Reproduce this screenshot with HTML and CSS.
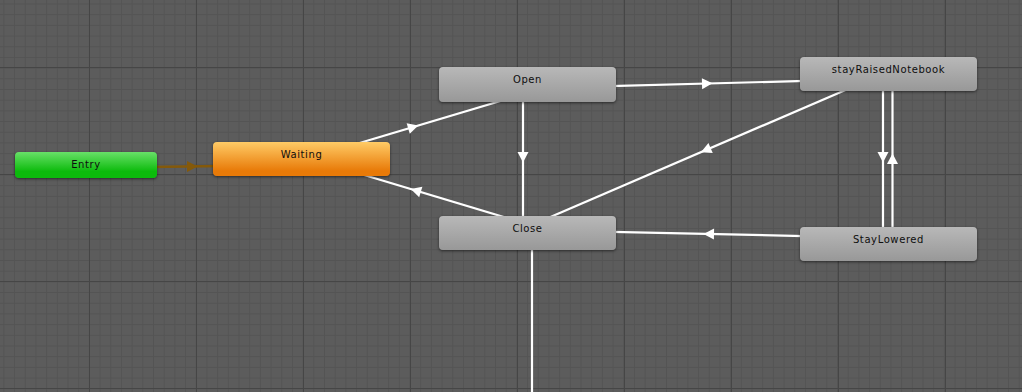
FILE: index.html
```html
<!DOCTYPE html>
<html lang="en">
<head>
    <meta charset="UTF-8">
    <meta name="viewport" content="width=device-width, initial-scale=1.0">
    <title>Animator</title>
    <link rel="stylesheet" href="styles.css">
</head>
<body>
    <div class="graph">
        <svg class="edges" width="1022" height="392" viewBox="0 0 1022 392">
            <!-- Entry -> Waiting -->
            <line class="edge-default" x1="150" y1="167" x2="220" y2="166"/>
            <g class="arrow-default" transform="translate(192 166.4)"><polygon points="5.5,0 -5,-5.5 -5,5.5"/></g>

            <!-- Waiting -> Open -->
            <line x1="301" y1="160.5" x2="527" y2="93"/>
            <g transform="translate(413 127) rotate(-16.6)"><polygon points="5.5,0 -5,-5.5 -5,5.5"/></g>

            <!-- Close -> Waiting -->
            <line x1="301" y1="156" x2="527" y2="224"/>
            <g transform="translate(416 190.6) rotate(196.7)"><polygon points="5.5,0 -5,-5.5 -5,5.5"/></g>

            <!-- Open -> Close -->
            <line x1="523" y1="90" x2="523" y2="225"/>
            <g transform="translate(523 157) rotate(90)"><polygon points="5.5,0 -5,-5.5 -5,5.5"/></g>

            <!-- Close -> Exit -->
            <line x1="532" y1="240" x2="532" y2="400"/>

            <!-- Open -> stayRaisedNotebook -->
            <line x1="600" y1="86.4" x2="815" y2="80.6"/>
            <g transform="translate(707 83.5) rotate(-1.5)"><polygon points="5.5,0 -5,-5.5 -5,5.5"/></g>

            <!-- stayRaisedNotebook -> Close -->
            <line x1="860" y1="83.7" x2="540" y2="221.6"/>
            <g transform="translate(706 150) rotate(156.7)"><polygon points="5.5,0 -5,-5.5 -5,5.5"/></g>

            <!-- stayRaisedNotebook <-> StayLowered -->
            <line x1="883" y1="80" x2="883" y2="240"/>
            <g transform="translate(883 157) rotate(90)"><polygon points="5.5,0 -5,-5.5 -5,5.5"/></g>
            <line x1="892.5" y1="80" x2="892.5" y2="240"/>
            <g transform="translate(892.5 159) rotate(-90)"><polygon points="5.5,0 -5,-5.5 -5,5.5"/></g>

            <!-- StayLowered -> Close -->
            <line x1="600" y1="231.7" x2="815" y2="236.3"/>
            <g transform="translate(709 234) rotate(181.2)"><polygon points="5.5,0 -5,-5.5 -5,5.5"/></g>
        </svg>

        <div class="node node-entry">Entry</div>
        <div class="node node-waiting">Waiting</div>
        <div class="node node-open">Open</div>
        <div class="node node-raised">stayRaisedNotebook</div>
        <div class="node node-close">Close</div>
        <div class="node node-lowered">StayLowered</div>
    </div>
</body>
</html>
```

FILE: styles.css
```css
* { box-sizing: border-box; margin: 0; padding: 0; }
body { background-color: #5c5c5c; font-family: "DejaVu Sans", Arial, sans-serif; }

/* free canvas: the grid and the state nodes */
.graph {
    position: relative; width: 1022px; height: 392px; overflow: hidden;
    background-color: #5c5c5c;
    background-image:
        linear-gradient(#464646 1px, transparent 1px),
        linear-gradient(90deg, #464646 1px, transparent 1px),
        linear-gradient(#545454 1px, transparent 1px),
        linear-gradient(90deg, #545454 1px, transparent 1px);
    background-size: 107px 107px, 107px 107px, 10.7px 10.7px, 10.7px 10.7px;
    background-position: 89px 67px, 89px 67px, 3.4px 3.5px, 3.4px 3.5px;
}
.edges { position: absolute; top: 0; left: 0; }
.edges line { stroke: #ffffff; stroke-width: 2.2; }
.edges polygon { fill: #ffffff; }
.edges .edge-default { stroke: #84590a; stroke-width: 2.4; }
.edges .arrow-default polygon { fill: #84590a; }

.node {
    position: absolute; width: 177px; height: 34px; border-radius: 4px;
    padding-top: 6px; line-height: 13px; text-align: center;
    font-size: 10px; letter-spacing: 0.6px; color: #0e0e0e;
    background-image: linear-gradient(#b8b8b8, #989898);
    box-shadow: 0 1px 3px rgba(0, 0, 0, 0.55);
}
.node-entry {
    left: 15px; top: 152px; width: 142px; height: 26px;
    background-image: linear-gradient(#68e068, #0cbb0c 75%);
}
.node-waiting {
    left: 213px; top: 142px;
    background-image: linear-gradient(#ffcb66, #e87a08 85%);
}
.node-open { left: 439px; top: 67px; height: 35px; }
.node-raised { left: 800px; top: 57px; }
.node-close { left: 439px; top: 216px; }
.node-lowered { left: 800px; top: 227px; }
```
